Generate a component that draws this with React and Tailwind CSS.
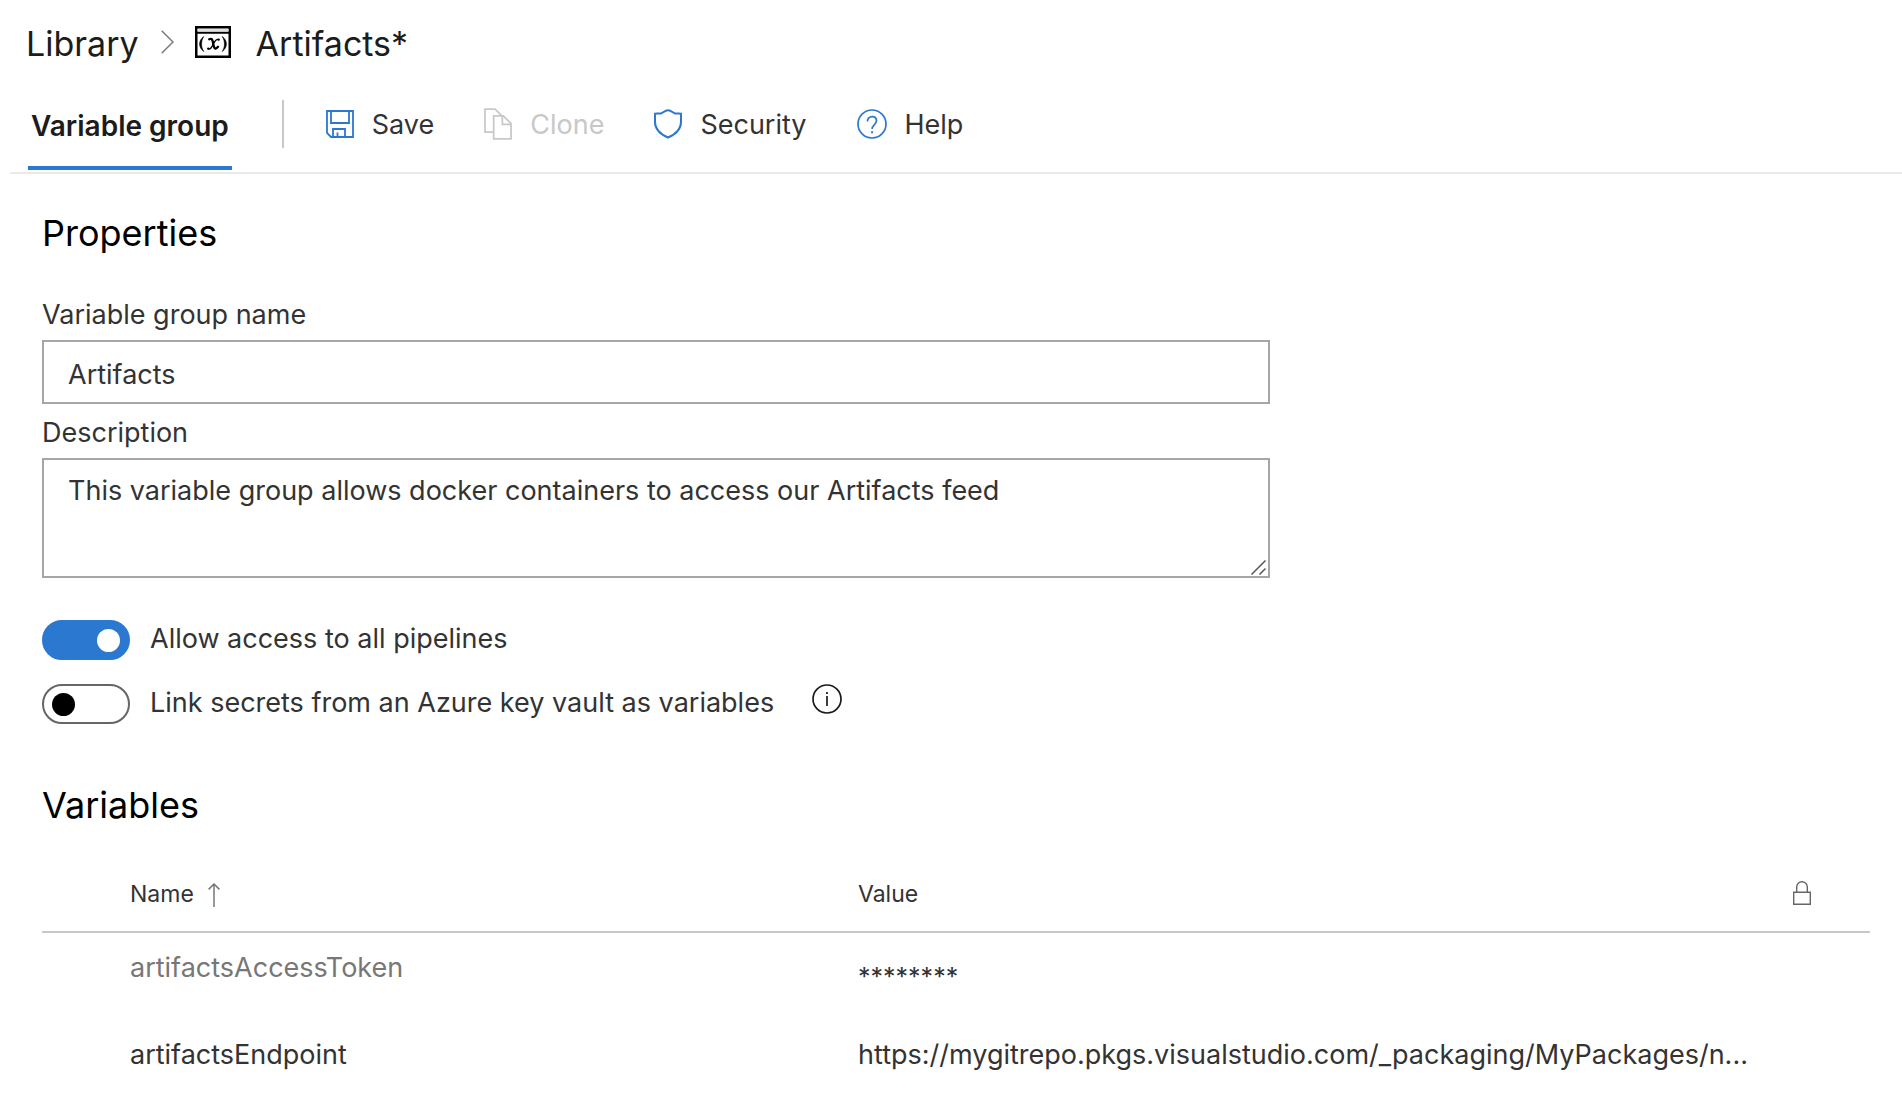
import { useState } from "react";

function VariableGroupIcon() {
  return (
    <svg viewBox="0 0 36 32" className="mb-1 h-8 w-9 shrink-0" aria-hidden="true">
      <rect x="1.250" y="1.250" width="33.500" height="29.500" fill="#fff" stroke="#000" strokeWidth="2.500" />
      <path d="M1 6.800h34" stroke="#000" strokeWidth="2" />
      <path d="M2.500 4.200h31" stroke="#ddd" strokeWidth="2" />
      <path d="M8.800 10.500C3.200 14.500 3.200 21.500 8.800 25.500C5.800 21.500 5.800 14.500 8.800 10.500z" stroke="#000" strokeWidth=".6" />
      <path d="M27.200 10.500C32.800 14.500 32.800 21.500 27.200 25.500C30.200 21.500 30.200 14.500 27.200 10.500z" stroke="#000" strokeWidth=".6" />
      <g fill="none" stroke="#000" strokeLinecap="round">
        <path d="M14.200 13.300C17 11.800 17.600 14 18.200 17.500C18.800 21.800 19.800 24.500 23 20.800" strokeWidth="2.300" />
        <path d="M23.800 13.600C21 12.200 19.500 16 18.200 18.200C16.800 21 15.300 24 13 22.800" strokeWidth="1.300" />
        <path d="M23.600 13.700h.1M13.200 22.500h.1" strokeWidth="2.200" />
      </g>
    </svg>
  );
}

function SaveIcon() {
  return (
    <svg viewBox="0 0 28 28" className="size-7 shrink-0" fill="none" stroke="#2b78d0" strokeWidth="1.800" aria-hidden="true">
      <path d="M1 1h26v26H5l-4-4z" />
      <path d="M5 1v12h18V1" />
      <path d="M7 27v-8h12v8" />
      <path d="M11.500 27v-4.500" />
    </svg>
  );
}

function CloneIcon() {
  return (
    <svg viewBox="0 0 29 33" className="h-8 w-7 shrink-0" fill="none" stroke="#c8c8c8" strokeWidth="1.800" aria-hidden="true">
      <path d="M9.500 25H1V1h10.500l6.500 6.500" />
      <path d="M10 8h10l8 8v16H10z" />
      <path d="M19 8v9h9" />
    </svg>
  );
}

function ShieldIcon() {
  return (
    <svg viewBox="0 0 28 30" className="h-[30px] w-7 shrink-0" fill="none" stroke="#2b78d0" strokeWidth="2" aria-hidden="true">
      <path d="M14 1.200c-3.500 0-4.500 2.600-7 3.200-2 .4-4 .1-6 .3V13c0 7.500 6 12.500 13 15.500C21 25.500 27 20.500 27 13V4.700c-2-.2-4 .1-6-.3-2.500-.6-3.500-3.200-7-3.200z" />
    </svg>
  );
}

function HelpIcon() {
  return (
    <svg viewBox="0 0 30 30" className="size-[30px] shrink-0" fill="none" stroke="#2b78d0" strokeWidth="1.700" aria-hidden="true">
      <circle cx="15" cy="15" r="14" />
      <path d="M10.500 12.500c0-3 1.900-4.900 4.600-4.900 2.600 0 4.400 1.700 4.400 4.200 0 3.600-4.400 4-4.400 8.200" />
      <path d="M15.100 22.300v2" strokeWidth="2" />
    </svg>
  );
}

function InfoIcon() {
  return (
    <svg viewBox="0 0 30 30" className="size-[30px]" fill="none" stroke="#1a1a1a" strokeWidth="1.700" aria-hidden="true">
      <circle cx="15" cy="15" r="14" />
      <path d="M15 12v10" />
      <path d="M15 8v2" />
    </svg>
  );
}

function SortArrow() {
  return (
    <svg viewBox="0 0 12 24" className="h-6 w-3" fill="none" stroke="#777" strokeWidth="1.500" aria-hidden="true">
      <path d="M6 24V1M.6 6.400 6 1l5.400 5.400" />
    </svg>
  );
}

function LockIcon() {
  return (
    <svg viewBox="0 0 18 24" className="h-6 w-[18px]" fill="none" stroke="#666" strokeWidth="1.400" aria-hidden="true">
      <path d="M.7 11.300h16.600v12H.7z" />
      <path d="M3.700 11.300V6a5.300 5.300 0 0 1 10.600 0v5.300" />
    </svg>
  );
}

function Command({ icon, label, disabled }) {
  return (
    <button
      type="button"
      disabled={disabled}
      className="flex items-center gap-[18px] leading-9 text-[#333] disabled:text-[#c8c8c8]"
    >
      {icon}
      <span className="pt-[2px]">{label}</span>
    </button>
  );
}

function Toggle({ id, label, defaultChecked }) {
  const [on, setOn] = useState(defaultChecked);
  return (
    <div className="flex items-start gap-5">
      <input
        id={id}
        type="checkbox"
        role="switch"
        checked={on}
        onChange={(e) => setOn(e.target.checked)}
        className="flex h-10 w-[88px] shrink-0 appearance-none items-center rounded-full border-2 border-[#666] bg-white px-2 before:size-[23px] before:rounded-full before:bg-black checked:justify-end checked:border-[#2b78d0] checked:bg-[#2b78d0] checked:before:bg-white"
      />
      <label htmlFor={id} className="leading-[38px]">
        {label}
      </label>
    </div>
  );
}

export default function App() {
  return (
    <div className="min-h-screen bg-white font-['Inter',sans-serif] text-[27px] text-[#333]">
      <nav aria-label="Breadcrumb" className="flex items-center pt-5 pb-2 pl-[26px] text-[34px] leading-[48px] text-[#1c1c1c]">
        <a href="#library">Library</a>
        <svg viewBox="0 0 13 24" className="mr-[21px] mb-1 ml-[22px] h-6 w-[13px]" fill="none" stroke="#777" strokeWidth="1.400" aria-hidden="true">
          <path d="M.7.700 12 12 .7 23.300" />
        </svg>
        <VariableGroupIcon />
        <h1 className="ml-[25px]">Artifacts*</h1>
      </nav>

      <div className="ml-[10px] flex h-[98px] items-center border-b-2 border-[#eaeaea] pl-[18px]">
        <button
          type="button"
          className="mb-[2px] h-[86px] self-end border-b-4 border-[#2b78d0] px-[3px] pt-[2px] text-[28px] font-semibold text-[#1c1c1c]"
        >
          Variable group
        </button>
        <div className="ml-[50px] h-12 w-[2px] bg-[#c8c8c8]" />
        <div className="ml-[42px] flex items-center gap-[50px]">
          <Command icon={<SaveIcon />} label="Save" />
          <Command icon={<CloneIcon />} label="Clone" disabled />
          <Command icon={<ShieldIcon />} label="Security" />
          <Command icon={<HelpIcon />} label="Help" />
        </div>
      </div>

      <main className="pt-[34px] pr-8 pl-[42px]">
        <section>
          <h2 className="text-[36px] leading-[50px] text-black">Properties</h2>
          <div className="mt-[38px] max-w-[1228px]">
            <label htmlFor="group-name" className="block leading-[38px]">
              Variable group name
            </label>
            <input
              id="group-name"
              type="text"
              defaultValue="Artifacts"
              className="mt-[6px] block h-16 w-full border-2 border-[#a6a6a6] px-6 pt-1"
            />
            <label htmlFor="description" className="mt-[10px] block leading-[38px]">
              Description
            </label>
            <div className="relative mt-[6px]">
              <textarea
                id="description"
                defaultValue="This variable group allows docker containers to access our Artifacts feed"
                className="block h-[120px] w-full resize-none border-2 border-[#a6a6a6] px-6 pt-3 leading-[38px]"
              />
              <svg viewBox="0 0 15 15" className="absolute right-1 bottom-[3px] size-[15px]" stroke="#555" strokeWidth="1.500" aria-hidden="true">
                <path d="M.5 14.500 14.500.5M8.500 14.500l6-6" />
              </svg>
            </div>
          </div>

          <div className="mt-[42px] flex flex-col gap-6">
            <Toggle id="allow-access" label="Allow access to all pipelines" defaultChecked />
            <div className="flex items-start gap-[38px]">
              <Toggle id="link-secrets" label="Link secrets from an Azure key vault as variables" defaultChecked={false} />
              <button type="button" aria-label="More information">
                <InfoIcon />
              </button>
            </div>
          </div>
        </section>

        <section className="mt-14">
          <h2 className="text-[36px] leading-[50px] text-black">Variables</h2>
          <table className="mt-[22px] w-full table-fixed text-left">
            <thead>
              <tr className="h-20 border-b-2 border-[#c8c8c8] text-[23px]">
                <th scope="col" className="w-[816px] pt-[6px] pl-[88px] font-normal">
                  <button type="button" className="flex items-center gap-[14px]">
                    Name
                    <SortArrow />
                  </button>
                </th>
                <th scope="col" className="pt-[6px] font-normal">Value</th>
                <th scope="col" aria-label="Secret" className="w-[77px] pt-[2px]">
                  <LockIcon />
                </th>
              </tr>
            </thead>
            <tbody>
              <tr className="h-[88px]">
                <td className="pt-4 pl-[88px] align-top leading-[38px] text-[#777]">artifactsAccessToken</td>
                <td className="text-[25px] leading-9">********</td>
                <td />
              </tr>
              <tr className="h-[88px]">
                <td className="pt-4 pl-[88px] align-top leading-[38px]">artifactsEndpoint</td>
                <td className="pt-4 align-top leading-[38px] whitespace-nowrap">
                  https://mygitrepo.pkgs.visualstudio.com/_packaging/MyPackages/n...
                </td>
                <td />
              </tr>
            </tbody>
          </table>
        </section>
      </main>
    </div>
  );
}
